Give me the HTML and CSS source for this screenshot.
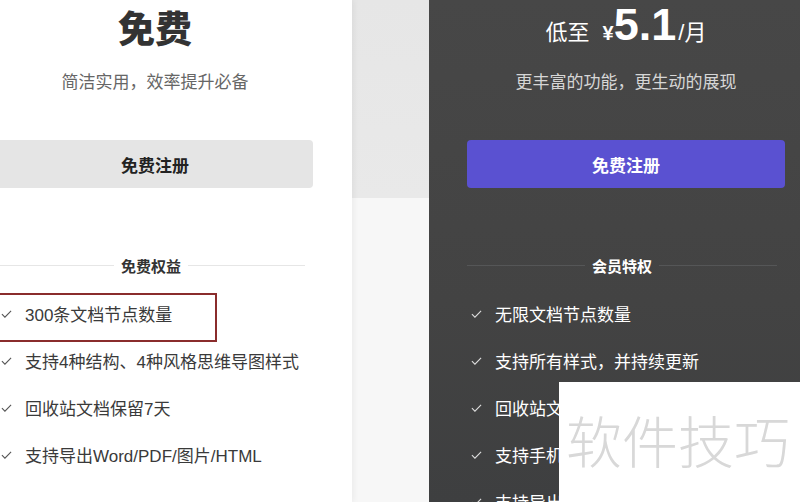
FILE: index.html
```html
<!DOCTYPE html>
<html lang="zh-CN">
<head>
<meta charset="utf-8">
<title>价格方案</title>
<link rel="stylesheet" href="styles.css">
</head>
<body>
<div class="page">
  <section class="card card-free">
    <h1 class="title">免费</h1>
    <p class="sub">简洁实用，效率提升必备</p>
    <button class="btn btn-free">免费注册</button>
    <div class="divider"><span class="line"></span><span class="divider-text">免费权益</span><span class="line"></span></div>
    <ul class="list">
      <li class="item marked"><svg class="check" viewBox="0 0 12 10"><path d="M1 5.2 L4.3 8.4 L11 1.6"/></svg><span>300条文档节点数量</span></li>
      <li class="item"><svg class="check" viewBox="0 0 12 10"><path d="M1 5.2 L4.3 8.4 L11 1.6"/></svg><span>支持4种结构、4种风格思维导图样式</span></li>
      <li class="item"><svg class="check" viewBox="0 0 12 10"><path d="M1 5.2 L4.3 8.4 L11 1.6"/></svg><span>回收站文档保留7天</span></li>
      <li class="item"><svg class="check" viewBox="0 0 12 10"><path d="M1 5.2 L4.3 8.4 L11 1.6"/></svg><span>支持导出Word/PDF/图片/HTML</span></li>
    </ul>
  </section>
  <section class="card card-vip">
    <div class="price"><span class="price-pre">低至</span><span class="price-cur">¥</span><span class="price-num">5.1</span><span class="price-unit">/月</span></div>
    <p class="sub sub-vip">更丰富的功能，更生动的展现</p>
    <button class="btn btn-vip">免费注册</button>
    <div class="divider divider-vip"><span class="line"></span><span class="divider-text">会员特权</span><span class="line"></span></div>
    <ul class="list list-vip">
      <li class="item"><svg class="check" viewBox="0 0 12 10"><path d="M1 5.2 L4.3 8.4 L11 1.6"/></svg><span>无限文档节点数量</span></li>
      <li class="item"><svg class="check" viewBox="0 0 12 10"><path d="M1 5.2 L4.3 8.4 L11 1.6"/></svg><span>支持所有样式，并持续更新</span></li>
      <li class="item"><svg class="check" viewBox="0 0 12 10"><path d="M1 5.2 L4.3 8.4 L11 1.6"/></svg><span>回收站文档保留30天</span></li>
      <li class="item"><svg class="check" viewBox="0 0 12 10"><path d="M1 5.2 L4.3 8.4 L11 1.6"/></svg><span>支持手机端同步编辑</span></li>
      <li class="item"><svg class="check" viewBox="0 0 12 10"><path d="M1 5.2 L4.3 8.4 L11 1.6"/></svg><span>支持导出高清图片</span></li>
    </ul>
  </section>
</div>
<div class="watermark">软件技巧</div>
</body>
</html>
```
FILE: styles.css
```css
* { box-sizing: border-box; }
html, body { margin: 0; padding: 0; }
body {
  width: 800px;
  height: 502px;
  overflow: hidden;
  position: relative;
  font-family: "Liberation Sans", "Noto Sans CJK SC", sans-serif;
  background: linear-gradient(to bottom, #e6e6e6 0, #e9e9e9 198px, #f7f7f7 198px, #f7f7f7 100%);
}
.page {
  display: flex;
  gap: 77px;
  margin-left: -42px;
  height: 502px;
  overflow: hidden;
}
.card {
  width: 394px;
  flex: none;
  padding: 0 39px;
  height: 502px;
  overflow: hidden;
  text-align: center;
}
.card-free {
  background: #fff;
  box-shadow: 2px 0 6px rgba(0,0,0,0.05);
}
.card-vip {
  padding: 0 38px;
  background: linear-gradient(to bottom, #474747 0, #434343 60%, #3e3f40 100%);
}
.title {
  margin: 0;
  height: 62px;
  line-height: 62px;
  font-size: 37px;
  font-weight: 900;
  color: #333;
}
.price {
  height: 62px;
  line-height: 50px;
  color: #fff;
  white-space: nowrap;
}
.price-pre { font-size: 22px; margin-right: 13px; }
.price-cur { font-size: 20px; font-weight: 700; }
.price-num { font-size: 45px; font-weight: 700; }
.price-unit { font-size: 22px; margin-left: 2px; }
.sub {
  margin: 9px 0 0;
  line-height: 24px;
  font-size: 17px;
  color: #666;
}
.sub-vip { color: #d6d6d6; }
.btn {
  display: block;
  width: 100%;
  height: 48px;
  margin-top: 45px;
  border: 0;
  border-radius: 4px;
  font-family: inherit;
  font-size: 17px;
  font-weight: 700;
}
.btn-free { background: #e5e5e5; color: #222; }
.btn-vip { background: #5a51d1; color: #fff; }
.divider {
  display: flex;
  align-items: center;
  gap: 7px;
  margin: 65px 8px 0 0;
  height: 24px;
}
.divider .line { flex: 1; height: 1px; background: #e6e6e6; }
.divider-text { font-size: 15px; font-weight: 700; color: #333; }
.divider-vip .line { background: #555657; }
.divider-vip .divider-text { color: #fff; }
.list {
  list-style: none;
  margin: 13px 0 0;
  padding: 0;
  text-align: left;
}
.item {
  position: relative;
  display: flex;
  align-items: center;
  gap: 13px;
  height: 47px;
  padding-left: 4px;
  font-size: 17px;
  color: #3a3a3a;
  white-space: nowrap;
}
.check {
  width: 11px;
  height: 10px;
  flex: none;
  fill: none;
  stroke: #555;
  stroke-width: 1.2;
}
.list-vip .item { color: #fff; }
.list-vip .check { stroke: #ddd; }
.marked::after {
  content: "";
  position: absolute;
  left: -10px;
  top: 3px;
  width: 226px;
  height: 45px;
  border: 2px solid #8a2c2c;
}
.watermark {
  position: absolute;
  left: 559px;
  top: 382px;
  width: 241px;
  height: 120px;
  background: #fff;
  padding: 22px 0 0 7px;
  font-family: "Noto Sans CJK SC", sans-serif;
  font-weight: 300;
  font-size: 56px;
  line-height: 70px;
  color: #d8d8d8;
  white-space: nowrap;
}
```
